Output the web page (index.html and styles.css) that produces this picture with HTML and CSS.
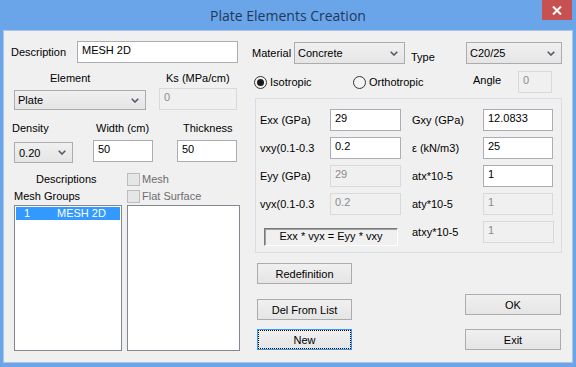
FILE: index.html
```html
<!DOCTYPE html>
<html lang="en">
<head>
  <meta charset="UTF-8">
  <title>Plate Elements Creation</title>
  <link rel="stylesheet" href="styles.css">
</head>
<body>

<div class="window">
  <div class="titlebar">
    <div></div>
    <div class="title">Plate Elements Creation</div>
    <div class="close">
      <svg width="10" height="9" viewBox="0 0 10 9"><path d="M1 0.5L9 8.5M9 0.5L1 8.5" stroke="#fff" stroke-width="2"/></svg>
    </div>
  </div>

  <div class="panel">
    <div class="left">
      <div class="row row-desc">
        <label class="lbl-desc" for="description">Description</label>
        <input type="text" id="description" class="field w-desc" value="MESH 2D">
      </div>

      <div class="row row-heads">
        <span class="head-element">Element</span>
        <span class="head-ks">Ks (MPa/cm)</span>
      </div>

      <div class="row row-element">
        <div class="combo w-element">
          <span>Plate</span>
          <svg width="8" height="5" viewBox="0 0 8 5"><path d="M0.7 0.7L4 4L7.3 0.7" fill="none" stroke="#4e5a68" stroke-width="1.6"/></svg>
        </div>
        <input type="text" class="field w-ks" value="0" disabled>
      </div>

      <div class="row row-sizes-heads">
        <span class="head-density">Density</span>
        <span class="head-width">Width (cm)</span>
        <span>Thickness</span>
      </div>

      <div class="row row-sizes">
        <div class="combo w-density">
          <span>0.20</span>
          <svg width="8" height="5" viewBox="0 0 8 5"><path d="M0.7 0.7L4 4L7.3 0.7" fill="none" stroke="#4e5a68" stroke-width="1.6"/></svg>
        </div>
        <input type="text" class="field w-width" value="50">
        <input type="text" class="field w-thick" value="50">
      </div>

      <div class="groups">
        <div class="col-desc">
          <div class="line line-indent">Descriptions</div>
          <div class="line">Mesh Groups</div>
          <div class="list">
            <div class="item selected"><span class="num">1</span><span>MESH 2D</span></div>
          </div>
        </div>
        <div class="col-check">
          <div class="line check"><span class="box"></span>Mesh</div>
          <div class="line check"><span class="box"></span>Flat Surface</div>
          <div class="list list-wide"></div>
        </div>
      </div>
    </div>

    <div class="right">
      <div class="row row-material">
        <span class="lbl-material">Material</span>
        <div class="combo w-material">
          <span>Concrete</span>
          <svg width="8" height="5" viewBox="0 0 8 5"><path d="M0.7 0.7L4 4L7.3 0.7" fill="none" stroke="#4e5a68" stroke-width="1.6"/></svg>
        </div>
        <span class="lbl-type">Type</span>
        <div class="combo w-type">
          <span>C20/25</span>
          <svg width="8" height="5" viewBox="0 0 8 5"><path d="M0.7 0.7L4 4L7.3 0.7" fill="none" stroke="#4e5a68" stroke-width="1.6"/></svg>
        </div>
      </div>

      <div class="row row-radios">
        <div class="opt opt-iso"><span class="radio checked"></span>Isotropic</div>
        <div class="opt opt-ortho"><span class="radio"></span>Orthotropic</div>
        <span class="lbl-angle">Angle</span>
        <input type="text" class="field w-angle" value="0" disabled>
      </div>

      <div class="group">
        <span>Exx (GPa)</span>
        <input type="text" class="field" value="29">
        <span>Gxy (GPa)</span>
        <input type="text" class="field" value="12.0833">

        <span>vxy(0.1-0.3</span>
        <input type="text" class="field" value="0.2">
        <span>&epsilon; (kN/m3)</span>
        <input type="text" class="field" value="25">

        <span>Eyy (GPa)</span>
        <input type="text" class="field" value="29" disabled>
        <span>atx*10-5</span>
        <input type="text" class="field" value="1">

        <span>vyx(0.1-0.3</span>
        <input type="text" class="field" value="0.2" disabled>
        <span>aty*10-5</span>
        <input type="text" class="field" value="1" disabled>

        <div class="formula">Exx * vyx = Eyy * vxy</div>
        <span>atxy*10-5</span>
        <input type="text" class="field" value="1" disabled>
      </div>

      <div class="actions">
        <div class="btn-col btn-col-left">
          <button class="btn btn-redef">Redefinition</button>
          <button class="btn btn-del">Del From List</button>
          <button class="btn btn-new">New</button>
        </div>
        <div class="btn-col btn-col-right">
          <button class="btn btn-ok">OK</button>
          <button class="btn btn-exit">Exit</button>
        </div>
      </div>
    </div>
  </div>
</div>

</body>
</html>
```

FILE: styles.css
```css
* {
  box-sizing: border-box;
}
body {
  margin: 0;
  font-family: 'Liberation Sans', Arial, sans-serif;
  font-size: 11px;
  color: #000;
}
.window {
  width: 576px;
  height: 367px;
  background: #6ba5e9;
  padding: 0 3px 4px;
  display: flex;
  flex-direction: column;
}
.titlebar {
  height: 30px;
  margin: 0 -3px;
  display: grid;
  grid-template-columns: 1fr auto 1fr;
}
.title {
  font-family: 'Open Sans', sans-serif;
  font-size: 14px;
  color: #1e395b;
  padding-top: 6px;
}
.close {
  justify-self: end;
  width: 30px;
  height: 20px;
  margin-right: 4px;
  background: #c75050;
  display: flex;
  align-items: center;
  justify-content: center;
}
.panel {
  flex: 1;
  display: flex;
  background: #f0f0f0;
  box-shadow: inset 0 0 0 1px #a9c4e6;
}
.row {
  display: flex;
}

/* inputs and combos */
.field {
  height: 22px;
  border: 1px solid #abadb3;
  background: #fff;
  font: inherit;
  color: #000;
  padding: 0 4px 5px;
  margin: 0;
  outline: none;
}
.field:disabled {
  background: #f0f0f0;
  border-color: #d9d9d9;
  color: #8b8b8b;
}
.combo {
  display: flex;
  align-items: center;
  justify-content: space-between;
  border: 1px solid #acacac;
  background: linear-gradient(#f0f0f0, #e5e5e5);
  padding: 0 6px 0 3px;
}

/* left side */
.left {
  width: 242px;
  padding-top: 11px;
}
.row-desc {
  height: 22px;
  align-items: center;
  padding-left: 8px;
}
.lbl-desc {
  width: 66px;
}
.w-desc {
  width: 161px;
}
.row-heads {
  margin-top: 7px;
  height: 16px;
  align-items: center;
  padding-left: 11px;
}
.head-element {
  width: 145px;
  padding-left: 36px;
}
.head-ks {
  padding-left: 7px;
}
.row-element {
  margin-top: 2px;
  height: 22px;
  align-items: flex-end;
  padding-left: 11px;
  gap: 13px;
}
.w-element {
  width: 132px;
  height: 20px;
}
.w-ks {
  width: 78px;
}
.row-sizes-heads {
  margin-top: 10px;
  height: 16px;
  align-items: center;
  padding-left: 9px;
}
.head-density {
  width: 84px;
}
.head-width {
  width: 87px;
}
.row-sizes {
  margin-top: 4px;
  height: 23px;
  padding-left: 11px;
  align-items: flex-start;
}
.w-density {
  width: 59px;
  height: 21px;
  margin-top: 2px;
  padding-left: 4px;
}
.w-width {
  width: 60px;
  margin-left: 20px;
}
.w-thick {
  width: 60px;
  margin-left: 24px;
}
.groups {
  margin-top: 8px;
  display: flex;
  gap: 5px;
  padding-left: 11px;
}
.col-desc {
  width: 108px;
}
.col-check {
  width: 113px;
}
.line {
  height: 17px;
  line-height: 17px;
}
.line-indent {
  padding-left: 22px;
}
.check {
  display: flex;
  align-items: center;
  color: #6d6d6d;
}
.box {
  width: 13px;
  height: 13px;
  border: 1px solid #bcbcbc;
  background: #e6e6e6;
  margin-right: 2px;
}
.list {
  height: 146px;
  border: 1px solid #828790;
  background: #fff;
  padding: 1px;
}
.item {
  height: 13px;
  line-height: 13px;
  padding-left: 8px;
  display: flex;
}
.item.selected {
  background: #3399ff;
  color: #fff;
}
.num {
  width: 33px;
}

/* right side */
.right {
  flex: 1;
  padding-top: 12px;
}
.row-material {
  height: 22px;
  align-items: center;
  padding-left: 7px;
}
.lbl-material {
  width: 42px;
}
.w-material {
  width: 111px;
  height: 22px;
}
.lbl-type {
  width: 55px;
  margin-left: 6px;
  padding-top: 7px;
}
.w-type {
  width: 96px;
  height: 22px;
}
.row-radios {
  margin-top: 7px;
  height: 22px;
  align-items: center;
}
.opt {
  display: flex;
  align-items: center;
}
.opt-iso {
  margin-left: 9px;
  width: 99px;
}
.opt-ortho {
  width: 120px;
}
.radio {
  width: 13px;
  height: 13px;
  border: 1px solid #333;
  border-radius: 50%;
  background: #f4f4f4;
  margin-right: 3px;
  display: flex;
  align-items: center;
  justify-content: center;
}
.radio.checked::after {
  content: '';
  width: 7px;
  height: 7px;
  border-radius: 50%;
  background: #1a1a1a;
}
.lbl-angle {
  width: 45px;
  padding-bottom: 5px;
}
.w-angle {
  width: 34px;
}
.group {
  margin: 5px 0 0 10px;
  width: 307px;
  height: 155px;
  border: 1px solid #d5dfe5;
  padding: 10px 0 0 4px;
  display: grid;
  grid-template-columns: 70px 82px 71px 70px;
  grid-auto-rows: 22px;
  row-gap: 6px;
  align-items: center;
}
.group .field {
  width: 71px;
}
.group .field:nth-child(4n) {
  width: 70px;
}
.formula {
  grid-column: span 2;
  align-self: start;
  margin: 7px 0 0 4px;
  width: 134px;
  height: 18px;
  line-height: 15px;
  text-align: center;
  border: 1px solid;
  border-color: #7a7a7a #ffffff #ffffff #7a7a7a;
  box-shadow: inset 1px 1px 0 #a0a0a0;
}

/* buttons */
.actions {
  display: flex;
  margin-left: 12px;
}
.btn-col {
  display: flex;
  flex-direction: column;
  width: 95px;
}
.btn-col-right {
  width: 96px;
  margin-left: 113px;
}
.btn {
  height: 21px;
  border: 1px solid #acacac;
  background: linear-gradient(#f0f0f0, #e5e5e5);
  font: inherit;
  color: #000;
  padding: 0;
}
.btn-redef {
  margin-top: 10px;
}
.btn-del {
  margin-top: 15px;
}
.btn-new {
  margin-top: 9px;
  border-color: #3399ff;
  outline: 1px dotted #000;
  outline-offset: -2px;
}
.btn-ok {
  margin-top: 41px;
}
.btn-exit {
  margin-top: 14px;
}
```
